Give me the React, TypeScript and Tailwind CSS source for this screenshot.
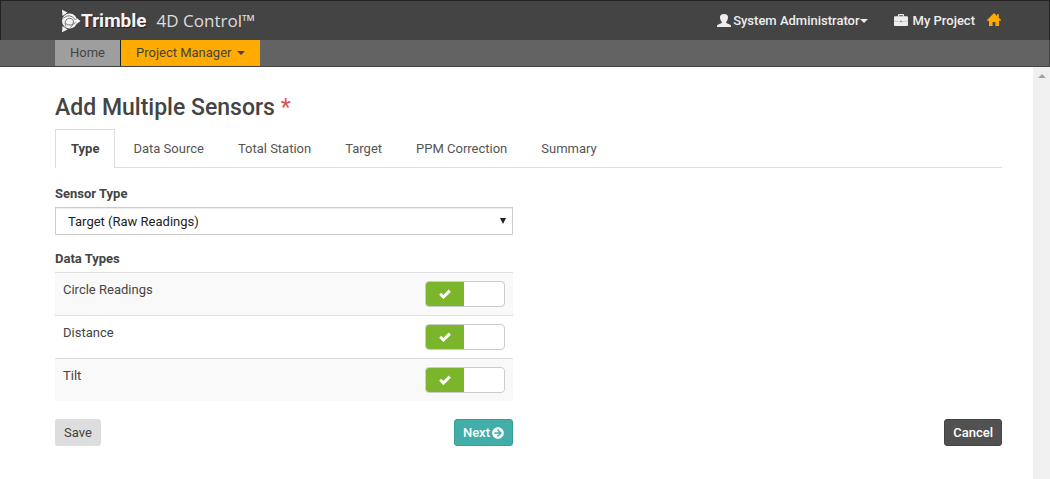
import React, { useState } from "react";
import { FaArrowCircleRight } from "react-icons/fa";

const tabs = ["Type", "Data Source", "Total Station", "Target", "PPM Correction", "Summary"];

function TrimbleMark() {
  return (
    <svg viewBox="0 0 20 24" className="h-6 w-5" aria-hidden="true">
      <path d="M1 .8 L6.5 3.6 L1.5 7 Z M1 23.2 L6.5 20.4 L1.5 17 Z M19.5 12 L16 9.2 V14.8 Z" fill="#f4f4f4" />
      <circle cx="8.6" cy="12" r="7.6" fill="#f4f4f4" />
      <g fill="none" stroke="#666" strokeWidth="0.9">
        <path d="M2.5 9.5 C6 5.5 11 6 14.5 11" />
        <path d="M5 17.5 C2.5 12 6 8.5 10 9.5 C13.5 10.5 13 15 9.5 18.5" />
        <path d="M4.5 14 C7 17 11 16.5 14.5 13.5" />
      </g>
    </svg>
  );
}

function UserIcon() {
  return (
    <svg viewBox="0 0 14 13" className="h-[13px] w-3.5" fill="currentColor" aria-hidden="true">
      <path d="M7 0 C9.8 0 11.1 1.4 11 3.4 C11 5.3 10.2 6.8 9.2 7.7 V8.8 C10 9.8 13.7 10.2 14 12 V13 H0 V12 C.3 10.2 4 9.8 4.8 8.8 V7.7 C3.8 6.8 3 5.3 3 3.4 C2.9 1.4 4.2 0 7 0 Z" />
    </svg>
  );
}

function BriefcaseIcon() {
  return (
    <svg viewBox="0 0 14 14" className="size-3.5" aria-hidden="true">
      <path d="M4.5 2.5 V1.2 Q4.5 .6 5.1 .6 H8.9 Q9.5 .6 9.5 1.2 V2.5" fill="none" stroke="currentColor" strokeWidth="1.2" />
      <path d="M1 2.2 H13 Q14 2.2 14 3.2 V11 Q14 12 13 12 H1 Q0 12 0 11 V3.2 Q0 2.2 1 2.2 Z" fill="currentColor" />
      <path d="M0 7 L5.5 7.7 H8.5 L14 7" fill="none" stroke="#bbb" strokeWidth="0.7" />
      <path d="M6 6.8 H8 V7.8 H6 Z" fill="#777" />
    </svg>
  );
}

function HomeIcon() {
  return (
    <svg viewBox="0 0 14 16" className="h-4 w-3.5" fill="currentColor" aria-hidden="true">
      <path d="M7 0 L10 3 V1.2 H11.8 V4.8 L14 7 V7.8 H12 V13 H8.4 V9 H5.6 V13 H2 V7.8 H0 V7 Z" />
    </svg>
  );
}

function Caret() {
  return <span className="inline-block border-x-4 border-t-4 border-x-transparent border-t-current" />;
}

function Toggle({ label }: { label: string }) {
  const [checked, setChecked] = useState(true);

  return (
    <label className="flex h-[26px] w-20 cursor-pointer overflow-hidden rounded border border-[#ccc] bg-white">
      <input
        type="checkbox"
        aria-label={label}
        checked={checked}
        onChange={(e) => setChecked(e.target.checked)}
        className="peer sr-only"
      />
      <span className="invisible flex w-[38px] items-center justify-center bg-[#7ab52c] text-white peer-checked:visible">
        <svg viewBox="0 0 12 10" className="h-2.5 w-3" aria-hidden="true">
          <path d="M1.2 4.8 L4.4 8 L10.8 1.6" fill="none" stroke="currentColor" strokeWidth="3" />
        </svg>
      </span>
    </label>
  );
}

export default function App() {
  const [activeTab, setActiveTab] = useState("Type");

  return (
    <div className="flex min-h-screen flex-col bg-white font-['Roboto',sans-serif] text-[13px] leading-[18px] text-[#444]">
      <header>
        <div className="flex h-10 items-center justify-between border border-b-0 border-[#222] bg-[#444] pr-12 pl-[60px] text-white">
          <a href="#" className="flex items-center text-[#f4f4f4]">
            <TrimbleMark />
            <span className="text-[19px] font-bold [text-shadow:1px_1px_1px_#222]">Trimble</span>
            <span className="ml-2.5 font-['Open_Sans',sans-serif] text-[17px] text-[#ddd]">4D Control™</span>
          </a>
          <nav className="flex items-center font-medium text-[#eee]">
            <button className="flex items-center">
              <UserIcon />
              <span className="ml-0.5">System Administrator</span>
              <Caret />
            </button>
            <a href="#" className="ml-[26px] flex items-center gap-[5px]">
              <BriefcaseIcon />
              My Project
            </a>
            <a href="#" aria-label="Home" className="ml-3 text-[#ffab00]">
              <HomeIcon />
            </a>
          </nav>
        </div>
        <nav className="flex h-[27px] border-r border-b border-[#444] bg-[#636363] pl-[55px]">
          <a href="#" className="flex items-center border-r border-[#222] bg-[#9e9e9e] px-[15px]">
            Home
          </a>
          <button className="flex items-center gap-1.5 bg-[#ffab00] px-[15px]">
            Project Manager
            <Caret />
          </button>
        </nav>
      </header>

      <div className="flex flex-1">
        <main className="flex-1 pt-[25px] pr-[31px] pl-[55px]">
          <h1 className="text-[23px] leading-8 font-medium">
            Add Multiple Sensors <span className="font-normal text-[#d9534f]">*</span>
          </h1>

          <div role="tablist" className="mt-[5px] flex gap-0.5 border-b border-[#ddd]">
            {tabs.map((tab) => (
              <button
                key={tab}
                role="tab"
                aria-selected={tab === activeTab}
                onClick={() => setActiveTab(tab)}
                className={
                  tab === activeTab
                    ? "-mb-px h-[39px] border border-b-0 border-[#ddd] bg-white px-[15px] font-bold"
                    : "h-[38px] border-t border-transparent px-4 text-[#555]"
                }
              >
                {tab}
              </button>
            ))}
          </div>

          <div className="grid grid-cols-2 gap-x-[31px]">
            <div>
              <label htmlFor="sensor-type" className="mt-[17px] mb-1 block font-bold">
                Sensor Type
              </label>
              <div className="relative">
                <select
                  id="sensor-type"
                  className="block h-7 w-full appearance-none border border-[#ccc] bg-white px-3 pt-px text-[#222] shadow-[inset_0_1px_1px_rgba(0,0,0,0.075)]"
                >
                  <option>Target (Raw Readings)</option>
                </select>
                <span className="pointer-events-none absolute top-[11px] right-[7px] border-x-[3px] border-t-[6px] border-x-transparent border-t-[#222]" />
              </div>

              <h2 className="mt-[15px] mb-1 font-bold">Data Types</h2>
              <table className="w-full">
                <tbody>
                  {["Circle Readings", "Distance", "Tilt"].map((type) => (
                    <tr key={type} className="border-t border-[#ddd] odd:bg-[#f9f9f9]">
                      <td className="p-2 align-top">{type}</td>
                      <td className="w-24 p-2">
                        <Toggle label={type} />
                      </td>
                    </tr>
                  ))}
                </tbody>
              </table>
            </div>
          </div>

          <div className="mt-[18px] grid grid-cols-2 gap-x-[31px]">
            <div className="flex justify-between">
              <button className="h-[27px] rounded-[3px] bg-[#ddd] px-[9px]">Save</button>
              <button className="flex h-[27px] items-center gap-0.5 rounded-[3px] border border-[#399a96] bg-[#42aeaa] px-2 font-medium text-white">
                Next
                <FaArrowCircleRight className="size-3" />
              </button>
            </div>
            <div className="flex justify-end">
              <button className="h-[27px] rounded-[3px] border border-[#444] bg-[#515151] px-2 font-medium text-white">
                Cancel
              </button>
            </div>
          </div>
        </main>

        <div className="flex w-[17px] justify-center bg-[#f0f0f0] pt-[7px]">
          <span className="h-0 border-x-4 border-b-4 border-x-transparent border-b-[#a3a3a3]" />
        </div>
      </div>
    </div>
  );
}
